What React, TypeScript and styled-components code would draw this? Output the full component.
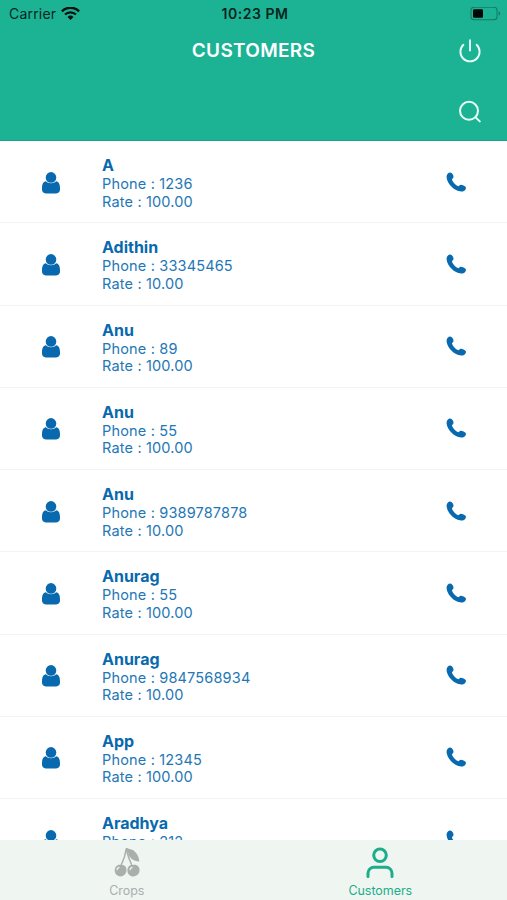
import React from "react";
import styled, { createGlobalStyle } from "styled-components";

const GlobalStyle = createGlobalStyle`
  * { box-sizing: border-box; }
  body { margin: 0; background: #fff; font-family: Inter, "Liberation Sans", sans-serif; }
`;

const Screen = styled.div`
  display: flex;
  flex-direction: column;
  width: 507px;
  height: 900px;
  overflow: hidden;
  background: #fff;
`;

const Header = styled.header`
  flex: none;
  height: 141px;
  background: #1cb394;
  border-bottom: 1px solid #17a386;
`;

const StatusBar = styled.div`
  display: grid;
  grid-template-columns: 1fr auto 1fr;
  align-items: center;
  height: 27px;
  padding: 0 6px 0 9px;
  color: #07251f;
  font-size: 14px;
  line-height: 27px;
`;

const Carrier = styled.div`
  display: flex;
  align-items: center;
  gap: 5px;
  letter-spacing: 0.2px;
`;

const Time = styled.div`
  font-weight: 600;
  letter-spacing: 0.55px;
`;

const BatterySlot = styled.div`
  display: flex;
  justify-content: flex-end;
`;

const TitleBar = styled.div`
  display: grid;
  grid-template-columns: 1fr auto 1fr;
  align-items: center;
  height: 47px;
  padding-right: 24px;
`;

const Title = styled.h1`
  grid-column: 2;
  margin: 0 -24px 0 0;
  color: #fff;
  font-size: 19px;
  font-weight: 600;
  line-height: 24px;
  letter-spacing: 0.3px;
`;

const IconButton = styled.button`
  justify-self: end;
  display: flex;
  width: 26px;
  height: 26px;
  padding: 0;
  border: 0;
  background: none;
`;

const SearchBar = styled.div`
  display: flex;
  justify-content: flex-end;
  align-items: center;
  height: 66px;
  padding: 10px 24px 0 0;
`;

const List = styled.main`
  flex: 1;
  min-height: 0;
  overflow: hidden;
`;

const Row = styled.article`
  display: grid;
  grid-template-columns: 102px 1fr 102px;
  height: 82.25px;
  border-bottom: 1px solid #f3f3f3;
  color: #0869ae;
`;

const RowIcon = styled.div`
  display: flex;
  justify-content: center;
  padding-top: 30.5px;
`;

const Details = styled.div`
  padding-top: 15px;
`;

const Name = styled.div`
  font-size: 16px;
  font-weight: 700;
  line-height: 19px;
`;

const Info = styled.div`
  color: #2477b5;
  font-size: 14.5px;
  line-height: 17.5px;
  letter-spacing: 0.17px;
`;

const TabBar = styled.nav`
  flex: none;
  display: grid;
  grid-template-columns: 1fr 1fr;
  height: 60px;
  background: #eff5f1;
`;

const Tab = styled.div<{ $active?: boolean }>`
  display: flex;
  flex-direction: column;
  align-items: center;
  padding-top: 6px;
  color: ${(p) => (p.$active ? "#1cad8b" : "#a9afac")};
  svg { height: 34px; }
`;

const TabLabel = styled.span`
  padding-top: 1px;
  font-size: 12.5px;
  line-height: 20px;
  letter-spacing: -0.05px;
`;

const Wifi = () => (
  <svg width="19" height="14" viewBox="0 0 19 14" fill="none" stroke="#07110f">
    <path d="M.9 4.3a12.4 12.4 0 0 1 17.2 0" strokeWidth="2.5" />
    <path d="M4 7.5a8 8 0 0 1 11 0" strokeWidth="2.3" />
    <path d="M9.5 13 6.5 10a4.3 4.3 0 0 1 6 0Z" fill="#07110f" stroke="none" />
  </svg>
);

const Battery = () => (
  <svg width="31" height="14" viewBox="0 0 31 14">
    <rect x="1" y=".2" width="26" height="12.6" rx="3" fill="none" stroke="#147b66" strokeWidth="1.1" />
    <rect x="3" y="2.2" width="10" height="8.6" rx="1.3" fill="#020706" />
    <path d="M28.6 4.3c2.2.8 2.2 3.6 0 4.4Z" fill="#147b66" />
  </svg>
);

const Power = () => (
  <svg width="26" height="26" viewBox="0 0 26 26" fill="none" stroke="#e9fff9" strokeWidth="1.9" strokeLinecap="round">
    <path d="M13 2.2v10.4M6.4 6.8a9.6 9.6 0 1 0 13.2 0" />
  </svg>
);

const Search = () => (
  <svg width="26" height="26" viewBox="0 0 26 26" fill="none" stroke="#e9fff9" strokeWidth="2" strokeLinecap="round">
    <circle cx="12" cy="11.8" r="9" />
    <path d="m18.6 18.4 4.2 4" />
  </svg>
);

const Person = () => (
  <svg width="18" height="22" viewBox="0 0 18 22" fill="currentColor">
    <path d="M3.7 9.2C1.4 9.5 0 12 0 16.300v1.300C0 20 1.400 21.400 3.800 21.400h10.400c2.400 0 3.800-1.400 3.800-3.800v-1.300c0-4.300-1.400-6.800-3.700-7.100A7.300 7.300 0 0 1 9 11.200a7.300 7.300 0 0 1-5.300-2Z" />
    <circle cx="9" cy="5.400" r="5.300" />
  </svg>
);

const Phone = () => (
  <svg width="20" height="20" viewBox="-0.6 0 20 20" fill="currentColor">
    <path d="M1.1 1.8C2.2.5 4 .2 5.2 1.2c1 .9 1.8 2.4 1.7 3.8-.1 1.1-1.2 1.7-1.6 2.400.8 2.600 3.700 5.800 6.500 6.900.9-.5 1.300-1.600 2.500-1.600 1.700 0 3.900 1 4.800 2.300.8 1.300-.4 3-1.800 3.900-2.100 1.200-5.400.5-8.300-1.100C4.100 15 .3 9.600 0 5.200-.1 3.700.3 2.700 1.100 1.800Z" />
  </svg>
);

const Cherries = () => (
  <svg width="28" viewBox="0 0 28 34" fill="none">
    <path d="M13.2 3C12.400 9.500 10.300 14.800 8 19.500M13.200 3C14.800 9.500 16.500 14.500 19 19.500" stroke="currentColor" strokeWidth="1.500" />
    <path d="M12.400 2.200c1.600-.3 2.700 0 3.600.9 4 .1 9.700 4.300 10.300 12.300-5.700 0-10.600-3.500-11.300-9.400Z" fill="currentColor" />
    <path d="M8 19.100c3.300-1 5.700 1.500 5.500 5.200-.2 3.600-2.800 6.100-6.100 6.100C4.200 30.400 1.700 28 1.700 24.600c0-3.800 3-6.600 6.300-5.500Z" fill="currentColor" />
    <path d="M19.900 19.100c3.400-1.200 6.700 1.300 6.700 5 0 3.800-2.800 6.300-6.200 6.300s-6-2.500-6-6c0-3.600 2.500-6.300 5.500-5.300Z" fill="currentColor" />
    <path d="M4 23.700c.2-1.200.9-2 2-2.400M17 23.700c.2-1.200.9-2 2-2.400" stroke="#eff5f1" strokeWidth="1.300" strokeLinecap="round" />
  </svg>
);

const PersonOutline = () => (
  <svg width="28" viewBox="0 0 28 34" fill="none" stroke="currentColor" strokeWidth="3" strokeLinecap="round">
    <circle cx="14" cy="9.300" r="6.300" />
    <path d="M2 30.500v-3.300a6 6 0 0 1 6-6h12a6 6 0 0 1 6 6v3.300" />
  </svg>
);

const customers = [
  { name: "A", phone: "1236", rate: "100.00" },
  { name: "Adithin", phone: "33345465", rate: "10.00" },
  { name: "Anu", phone: "89", rate: "100.00" },
  { name: "Anu", phone: "55", rate: "100.00" },
  { name: "Anu", phone: "9389787878", rate: "10.00" },
  { name: "Anurag", phone: "55", rate: "100.00" },
  { name: "Anurag", phone: "9847568934", rate: "10.00" },
  { name: "App", phone: "12345", rate: "100.00" },
  { name: "Aradhya", phone: "212", rate: "100.00" },
];

export default function App() {
  return (
    <Screen>
      <GlobalStyle />
      <Header>
        <StatusBar>
          <Carrier>Carrier <Wifi /></Carrier>
          <Time>10:23 PM</Time>
          <BatterySlot><Battery /></BatterySlot>
        </StatusBar>
        <TitleBar>
          <Title>CUSTOMERS</Title>
          <IconButton aria-label="Log out"><Power /></IconButton>
        </TitleBar>
        <SearchBar>
          <IconButton aria-label="Search"><Search /></IconButton>
        </SearchBar>
      </Header>
      <List>
        {customers.map((c, i) => (
          <Row key={i}>
            <RowIcon><Person /></RowIcon>
            <Details>
              <Name>{c.name}</Name>
              <Info>Phone : {c.phone}</Info>
              <Info>Rate : {c.rate}</Info>
            </Details>
            <RowIcon><Phone /></RowIcon>
          </Row>
        ))}
      </List>
      <TabBar>
        <Tab>
          <Cherries />
          <TabLabel>Crops</TabLabel>
        </Tab>
        <Tab $active>
          <PersonOutline />
          <TabLabel>Customers</TabLabel>
        </Tab>
      </TabBar>
    </Screen>
  );
}
